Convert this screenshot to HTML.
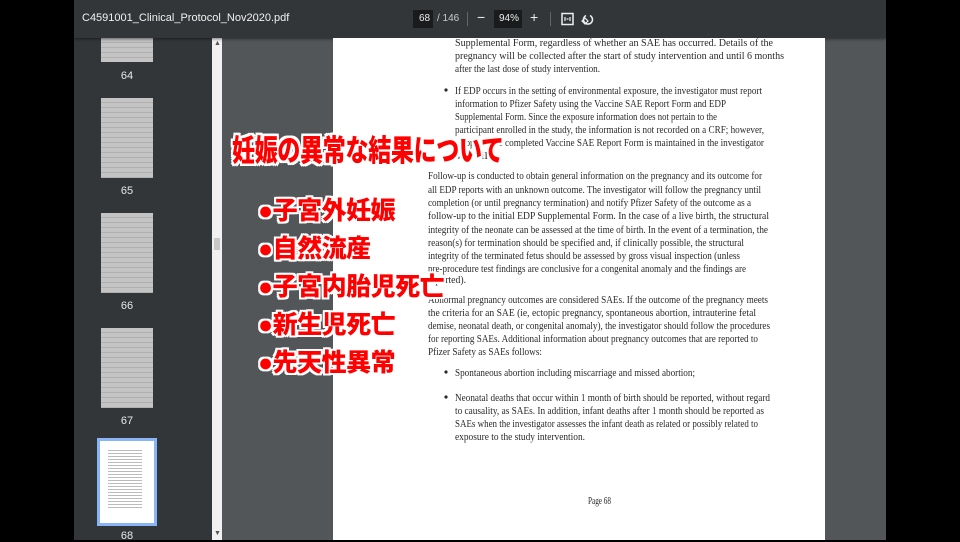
<!DOCTYPE html>
<html><head><meta charset="utf-8"><style>
html,body{margin:0;padding:0;width:960px;height:540px;overflow:hidden;background:#000}
.abs{position:absolute}
.jp{font-family:"Liberation Sans","Noto Sans CJK JP",sans-serif;font-weight:900;color:#f00;
 text-shadow:0 0 2px #fff,1px 1px 0 #fff,-1px -1px 0 #fff,1px -1px 0 #fff,-1px 1px 0 #fff,2px 0 0 #fff,-2px 0 0 #fff,0 2px 0 #fff,0 -2px 0 #fff,2px 2px 0 #fff,-2px -2px 0 #fff,2px -2px 0 #fff,-2px 2px 0 #fff;white-space:nowrap;transform-origin:0 0}
.th{position:absolute;left:101px;width:52px;background:#c4c4c4;background-image:repeating-linear-gradient(#c4c4c4 0 4px,#b0b0b0 4px 5px);background-clip:content-box;padding:0;box-sizing:border-box}
.lb{position:absolute;left:74px;width:106px;text-align:center;color:#e8e8e8;font:11px "Liberation Sans",sans-serif}
</style></head><body>
<div class="abs" style="left:74px;top:0;width:812px;height:540px;background:#525659"></div>
<div class="abs" style="left:74px;top:38px;width:138px;height:502px;background:#323639"></div>
<div class="abs" style="left:212px;top:38px;width:10px;height:502px;background:#f1f1f1"></div>
<div class="abs" style="left:214px;top:238px;width:6px;height:12px;background:#c8c8c8"></div>
<div class="abs" style="left:214px;top:40px;font:7px sans-serif;color:#555">▲</div>
<div class="abs" style="left:214px;top:530px;font:7px sans-serif;color:#555">▼</div>
<div class="th" style="top:38px;height:24px"></div>
<div class="lb" style="top:70px">64</div>
<div class="th" style="top:98px;height:80px"></div>
<div class="lb" style="top:185px">65</div>
<div class="th" style="top:213px;height:80px"></div>
<div class="lb" style="top:300px">66</div>
<div class="th" style="top:328px;height:80px"></div>
<div class="lb" style="top:415px">67</div>
<div class="abs" style="left:97px;top:438px;width:54px;height:82px;background:#fff;border:3px solid #8ab4f8"></div>
<div class="abs" style="left:108px;top:448px;width:34px;height:60px;background:repeating-linear-gradient(#fff 0 2px,#bbb 2px 3px)"></div>
<div class="lb" style="top:530px">68</div>
<div class="abs" style="left:74px;top:0;width:812px;height:38px;background:#323639;box-shadow:0 1px 3px rgba(0,0,0,.5)"></div>
<div class="abs" style="left:82px;top:12px;font:11px 'Liberation Sans',sans-serif;color:#f1f1f1">C4591001_Clinical_Protocol_Nov2020.pdf</div>
<div class="abs" style="left:413px;top:10px;width:20px;height:18px;background:#191b1c"></div>
<div class="abs" style="left:419px;top:13px;font:10px 'Liberation Sans',sans-serif;color:#eee">68</div>
<div class="abs" style="left:437px;top:13px;font:10px 'Liberation Sans',sans-serif;color:#ccc">/ 146</div>
<div class="abs" style="left:467px;top:12px;width:1px;height:14px;background:#666"></div>
<div class="abs" style="left:477px;top:9px;font:14px 'Liberation Sans',sans-serif;color:#eee">−</div>
<div class="abs" style="left:494px;top:10px;width:28px;height:18px;background:#191b1c"></div>
<div class="abs" style="left:499px;top:13px;font:10px 'Liberation Sans',sans-serif;color:#eee">94%</div>
<div class="abs" style="left:530px;top:9px;font:14px 'Liberation Sans',sans-serif;color:#eee">+</div>
<div class="abs" style="left:550px;top:12px;width:1px;height:14px;background:#666"></div>
<svg class="abs" style="left:560px;top:12px" width="40" height="14" viewBox="0 0 40 14"><rect x="2" y="1.5" width="11" height="11" fill="none" stroke="#eee" stroke-width="1.5"/><path d="M5 5v4M10 5v4M6.5 7h2" stroke="#eee" stroke-width="1.2"/><path d="M26 3.5a4.5 4.5 0 1 0 4 0" fill="none" stroke="#eee" stroke-width="1.5"/><path d="M25 6l3 3-3 3-3-3z" fill="none" stroke="#eee" stroke-width="1.2"/></svg>
<div class="abs" style="left:333px;top:38px;width:492px;height:502px;background:#fff"></div>
<svg class="abs" style="left:0;top:0" width="960" height="540" viewBox="0 0 960 540" font-family="Liberation Serif,serif" font-size="10.5" fill="#2a2a2a">
<g lengthAdjust="spacingAndGlyphs">
<text lengthAdjust="spacingAndGlyphs" x="455" y="46" textLength="318">Supplemental Form, regardless of whether an SAE has occurred.  Details of the</text>
<text lengthAdjust="spacingAndGlyphs" x="455" y="59" textLength="329">pregnancy will be collected after the start of study intervention and until 6 months</text>
<text lengthAdjust="spacingAndGlyphs" x="455" y="72" textLength="145">after the last dose of study intervention.</text>
<circle cx="446" cy="90" r="1.6"/>
<text lengthAdjust="spacingAndGlyphs" x="455" y="94" textLength="307">If EDP occurs in the setting of environmental exposure, the investigator must report</text>
<text lengthAdjust="spacingAndGlyphs" x="455" y="107" textLength="271">information to Pfizer Safety using the Vaccine SAE Report Form and EDP</text>
<text lengthAdjust="spacingAndGlyphs" x="455" y="120" textLength="262">Supplemental Form.  Since the exposure information does not pertain to the</text>
<text lengthAdjust="spacingAndGlyphs" x="455" y="133" textLength="309">participant enrolled in the study, the information is not recorded on a CRF; however,</text>
<text lengthAdjust="spacingAndGlyphs" x="455" y="146" textLength="309">a copy of the completed Vaccine SAE Report Form is maintained in the investigator</text>
<text lengthAdjust="spacingAndGlyphs" x="455" y="159" textLength="42">site file.</text>
<text lengthAdjust="spacingAndGlyphs" x="428" y="179" textLength="334">Follow-up is conducted to obtain general information on the pregnancy and its outcome for</text>
<text lengthAdjust="spacingAndGlyphs" x="428" y="193" textLength="333">all EDP reports with an unknown outcome.  The investigator will follow the pregnancy until</text>
<text lengthAdjust="spacingAndGlyphs" x="428" y="206" textLength="323">completion (or until pregnancy termination) and notify Pfizer Safety of the outcome as a</text>
<text lengthAdjust="spacingAndGlyphs" x="428" y="219" textLength="341">follow-up to the initial EDP Supplemental Form.  In the case of a live birth, the structural</text>
<text lengthAdjust="spacingAndGlyphs" x="428" y="233" textLength="340">integrity of the neonate can be assessed at the time of birth.  In the event of a termination, the</text>
<text lengthAdjust="spacingAndGlyphs" x="428" y="246" textLength="316">reason(s) for termination should be specified and, if clinically possible, the structural</text>
<text lengthAdjust="spacingAndGlyphs" x="428" y="259" textLength="312">integrity of the terminated fetus should be assessed by gross visual inspection (unless</text>
<text lengthAdjust="spacingAndGlyphs" x="428" y="272" textLength="318">pre-procedure test findings are conclusive for a congenital anomaly and the findings are</text>
<text lengthAdjust="spacingAndGlyphs" x="428" y="283" textLength="38">reported).</text>
<text lengthAdjust="spacingAndGlyphs" x="428" y="303" textLength="340">Abnormal pregnancy outcomes are considered SAEs.  If the outcome of the pregnancy meets</text>
<text lengthAdjust="spacingAndGlyphs" x="428" y="316" textLength="328">the criteria for an SAE (ie, ectopic pregnancy, spontaneous abortion, intrauterine fetal</text>
<text lengthAdjust="spacingAndGlyphs" x="428" y="329" textLength="342">demise, neonatal death, or congenital anomaly), the investigator should follow the procedures</text>
<text lengthAdjust="spacingAndGlyphs" x="428" y="342" textLength="330">for reporting SAEs.  Additional information about pregnancy outcomes that are reported to</text>
<text lengthAdjust="spacingAndGlyphs" x="428" y="355" textLength="114">Pfizer Safety as SAEs follows:</text>
<circle cx="446" cy="372" r="1.6"/>
<text lengthAdjust="spacingAndGlyphs" x="455" y="376" textLength="240">Spontaneous abortion including miscarriage and missed abortion;</text>
<circle cx="446" cy="397" r="1.6"/>
<text lengthAdjust="spacingAndGlyphs" x="455" y="401" textLength="315">Neonatal deaths that occur within 1 month of birth should be reported, without regard</text>
<text lengthAdjust="spacingAndGlyphs" x="455" y="414" textLength="309">to causality, as SAEs.  In addition, infant deaths after 1 month should be reported as</text>
<text lengthAdjust="spacingAndGlyphs" x="455" y="427" textLength="303">SAEs when the investigator assesses the infant death as related or possibly related to</text>
<text lengthAdjust="spacingAndGlyphs" x="455" y="440" textLength="130">exposure to the study intervention.</text>
<text lengthAdjust="spacingAndGlyphs" x="588" y="504" textLength="23">Page 68</text>
</g>
</svg>
<div class="abs jp" style="left:232px;top:126px;font-size:23px;letter-spacing:-0.3px;transform:scaleY(1.3)">妊娠の異常な結果について</div>
<div class="abs jp" style="left:258px;top:192px;font-size:25px;line-height:38px;letter-spacing:-0.5px">●子宮外妊娠<br>●自然流産<br>●子宮内胎児死亡<br>●新生児死亡<br>●先天性異常</div>
</body></html>
